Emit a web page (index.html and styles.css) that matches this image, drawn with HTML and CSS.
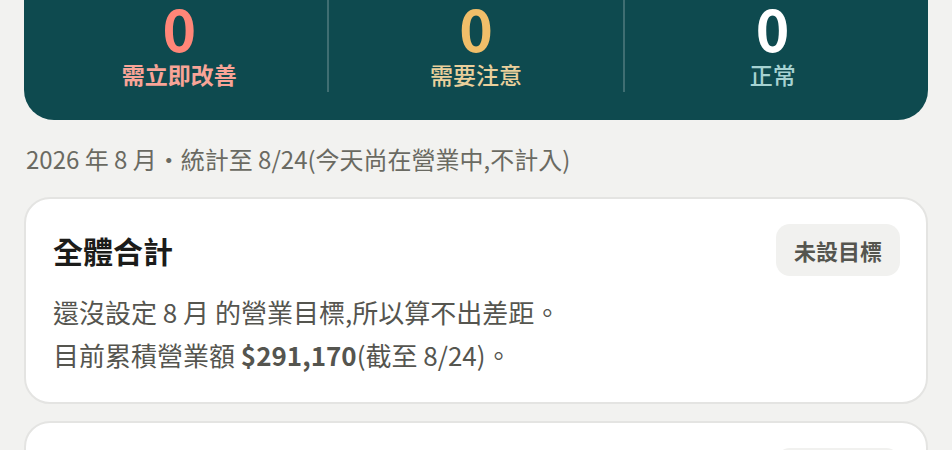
FILE: index.html
```html
<!DOCTYPE html>
<html lang="zh-Hant">
<head>
<meta charset="utf-8">
<title>營業目標</title>
<link rel="stylesheet" href="styles.css">
</head>
<body>
<div class="page">
  <section class="summary">
    <div class="stat">
      <div class="stat-num num-bad">0</div>
      <div class="stat-label label-bad">需立即改善</div>
    </div>
    <div class="stat">
      <div class="stat-num num-warn">0</div>
      <div class="stat-label label-warn">需要注意</div>
    </div>
    <div class="stat">
      <div class="stat-num num-ok">0</div>
      <div class="stat-label label-ok">正常</div>
    </div>
  </section>

  <p class="period">2026 年 8 月・統計至 8/24(今天尚在營業中,不計入)</p>

  <section class="card">
    <div class="card-head">
      <h2 class="card-title">全體合計</h2>
      <span class="badge">未設目標</span>
    </div>
    <div class="card-body">
      <p>還沒設定 8 月 的營業目標,所以算不出差距。</p>
      <p>目前累積營業額 <strong>$291,170</strong>(截至 8/24)。</p>
    </div>
  </section>

  <section class="card">
    <div class="card-head">
      <h2 class="card-title">分店</h2>
      <span class="badge">未設目標</span>
    </div>
  </section>
</div>
</body>
</html>
```

FILE: styles.css
```css
* { box-sizing: border-box; }
html, body {
  margin: 0;
  padding: 0;
  background: #f2f2f0;
  font-family: "Noto Sans CJK TC", "Noto Sans", sans-serif;
  overflow: hidden;
}
.page {
  padding: 0 24px;
}
.summary {
  display: flex;
  background: #0e4a4f;
  border-radius: 0 0 30px 30px;
  padding: 0 8px 28px;
}
.stat {
  flex: 1;
  display: flex;
  flex-direction: column;
  align-items: center;
  height: 92px;
}
.stat + .stat {
  border-left: 2px solid #3f6e72;
}
.stat-num {
  font-size: 57px;
  font-weight: 700;
  line-height: 57px;
  margin-top: -1px;
}
.stat-label {
  font-size: 23px;
  font-weight: 700;
  line-height: 30px;
  margin-top: 3px;
}
.label-ok, .label-warn { font-weight: 500; }
.num-bad { color: #ff8678; }
.label-bad { color: #f8a497; }
.num-warn { color: #f0be69; }
.label-warn { color: #ead09c; }
.num-ok { color: #ffffff; }
.label-ok { color: #a6d2d2; }

.period {
  margin: 0;
  padding: 23px 0 0 2px;
  height: 77px;
  font-size: 24px;
  line-height: 32px;
  color: #6a6a62;
}
.card {
  background: #ffffff;
  border: 2px solid #e4e4e2;
  border-radius: 26px;
  padding: 25px 26px 26px 27px;
  margin-bottom: 17px;
}
.card-head {
  display: flex;
  align-items: center;
  justify-content: space-between;
}
.card-title {
  margin: 0;
  font-size: 30px;
  font-weight: 700;
  color: #1c1c1a;
}
.badge {
  display: flex;
  align-items: center;
  height: 52px;
  padding: 0 18px;
  background: #f1f1ef;
  border-radius: 14px;
  font-size: 22px;
  font-weight: 700;
  color: #55554f;
}
.card-body {
  margin-top: 14px;
}
.card-body p {
  margin: 0;
  font-size: 26px;
  line-height: 43px;
  color: #55554f;
}
.card-body strong {
  font-weight: 700;
}
```
